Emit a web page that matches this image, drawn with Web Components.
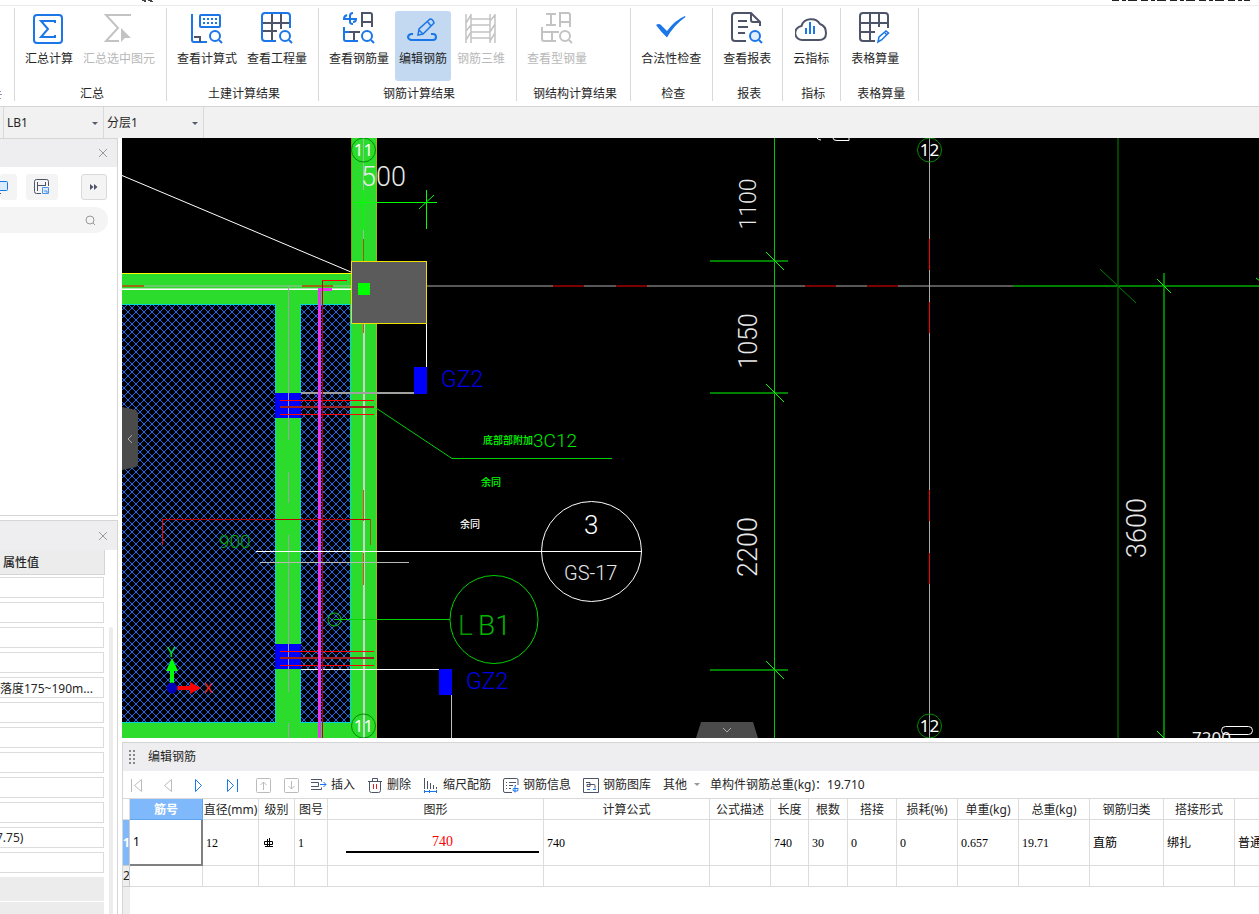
<!DOCTYPE html>
<html lang="zh-CN">
<head>
<meta charset="utf-8">
<title>编辑钢筋</title>
<style>
html,body{margin:0;height:100%}
body{font:12px/18px "Noto Sans","Noto Sans CJK SC",sans-serif;color:#262626;background:#fff;overflow:hidden}
</style>
</head>
<body>
<rebar-app></rebar-app>
<script>
const BLUE = '#1b76e8', DARK = '#4d5468', GREY = '#c3c3c3';
const LENS = (c, x = 24, y = 24) => `<g stroke="${c}" stroke-width="2"><circle cx="${x}" cy="${y}" r="5"/><path d="M${x + 4} ${y + 4}l3 3"/></g>`;
const ICONS = {
  sum: `<g stroke="${BLUE}" stroke-width="2"><rect x="1" y="3" width="28" height="28" rx="3"/><path d="M22 11V9H8l7 8-7 8h14v-2"/></g>`,
  sumsel: `<path stroke="${GREY}" stroke-width="2" d="M28 3H3l12 13L3 29h13"/><path fill="${GREY}" d="M18 16l10 10h-6l-4 4z"/>`,
  formula: `<path stroke="${BLUE}" stroke-width="2" d="M1 2v26q0 2 2 2h13"/><path stroke="${DARK}" stroke-width="2" d="M3 25h6v5"/><rect x="9" y="3" width="20" height="12" rx="1" stroke="${BLUE}" stroke-width="2"/><path stroke="${BLUE}" stroke-width="2" stroke-dasharray="2 2" d="M12 7h14M12 11h14"/>${LENS(BLUE)}`,
  quantity: `<path stroke="${DARK}" stroke-width="2" d="M11 2v27M20 2v15M2 11h27M2 19h14"/><path stroke="${BLUE}" stroke-width="2" d="M29 16V4q0-3-3-3H4Q1 1 1 4v22q0 3 3 3h11"/>${LENS(BLUE)}`,
  rebar: `<g stroke-width="2"><g stroke="${BLUE}"><path d="M10 1Q7 1 7 4v6q0 2 3 2M4 3Q1 4 1 7h12q0 3-3 3M1 15v12q0 2 2 2h12M1 20h5"/></g><g stroke="${DARK}"><path d="M19 15V1h8q2 0 2 2v12M19 10h10M6 20h11M11 20v8"/></g></g>${LENS(BLUE)}`,
  edit: `<g stroke="${BLUE}" stroke-width="2"><path d="M6 22H4q-3 1-3 3t3 3h22q3 0 3-3t-3-3h-2"/><path stroke-width="1.500" d="M11 23l1-6L23 7q3 0 4 4L16 22zM20 9l4 5M12 18l4 4"/></g>`,
  view3d: `<g stroke="${GREY}" stroke-width="1.500"><path d="M1 2v29M6 2v29M25 2v29M30 2v29M6 7h19M6 13h19M6 20h19M6 26h19M1 11l5-8M1 28l5-8M25 9l5-6M25 29l5-8M1 19l5-6M25 20l5-8"/></g>`,
  steel: `<g stroke="${GREY}" stroke-width="2"><path d="M5 2h10M10 2v11M5 13h10M19 15V1h8q2 0 2 2v12M19 10h10M1 15v12q0 2 2 2h12M1 20h17M11 20v9"/></g>${LENS(GREY)}`,
  check: `<path fill="${BLUE}" d="M1 13q3-2 5 0l6 6Q20 8 30 4l.5 1Q19 13 12 25.500 6 20 1 13z"/>`,
  report: `<path stroke="${DARK}" stroke-width="2" d="M15 29H4q-3 0-3-3V4q0-3 3-3h16l9 9v4M20 1v7q0 2 2 2h7M7 9h9M7 15h10M7 21h7"/><circle cx="24" cy="24" r="5" fill="#e3eefc"/>${LENS(BLUE)}`,
  cloud: `<path stroke="${DARK}" stroke-width="2" d="M8 28a7 7 0 0 1-1.500-14A10 9 0 0 1 25 12q6 2 6 9t-7 7z"/><path stroke="${BLUE}" stroke-width="2" d="M11 16v6M15 10v12M19 14v8"/>`,
  table: `<path stroke="${DARK}" stroke-width="2" d="M16 29H4q-3 0-3-3V4q0-3 3-3h22q3 0 3 3v12M11 1v28M20 1v14M1 11h28M1 20h15"/><path stroke="${BLUE}" stroke-width="1.500" d="M19 30l1-5 7-6 2.500 2-7 7zM26 21l2 2"/>`,
  first: `<path stroke="#bbb" d="M3.500 2v13M13.500 2.500v12l-7-6z"/>`,
  prev: `<path stroke="#bbb" d="M11.500 2.500v12l-7-6z"/>`,
  next: `<path stroke="${BLUE}" d="M3.500 2.500v12l6-6z"/>`,
  last: `<path stroke="${BLUE}" d="M3.500 2.500v12l6-6zM13.500 2v13"/>`,
  up: `<rect x=".5" y="1.500" width="14" height="14" rx="1" stroke="#bbb"/><path stroke="#bbb" d="M7.500 13V5M4.500 8l3-3 3 3"/>`,
  down: `<rect x=".5" y="1.500" width="14" height="14" rx="1" stroke="#bbb"/><path stroke="#bbb" d="M7.500 4v8M4.500 9l3 3 3-3"/>`,
  insert: `<path stroke="${DARK}" d="M0 2.500h10.500v2M0 12.500h10.500v-2M0 5.500h7.500v4H0"/><path stroke="${BLUE}" d="M9 7.500h6M12.500 5l2.500 2.500-2.500 2.500"/>`,
  trash: `<path stroke="${DARK}" d="M1 4.500h14M2.500 4.500v9q0 2 2 2h7q2 0 2-2v-9M5.500 4V1.500h5V4"/><path stroke="#e02020" d="M6.500 7v5M9.500 7v5"/>`,
  scale: `<path stroke="${DARK}" d="M1.500 1v11M4.500 4v8M7.500 6v6M10.500 8v4M13.500 10v2"/><path stroke="${BLUE}" d="M1 14.500h13M1.500 13v3M6.500 13v3M13.500 13v3"/>`,
  info: `<path stroke="${DARK}" d="M9 15.500H2q-1.500 0-1.500-1.500V3q0-1.500 1.500-1.500h11.500q1.500 0 1.500 1.500v5M3 5.500h1M6 5.500h7M3 8.500h1M6 8.500h4M3 11.500h1M6 11.500h2"/><path stroke="${BLUE}" d="M13 8.500h-1v7M15.500 11.500h-5q-1 1 0 2.500h4q1-1 0-2.500"/>`,
  library: `<path stroke="${DARK}" d="M.5 1.500h15v14H.5zM3 5.500h4v4H4v-2h7q1 0 1 1v3"/><path stroke="${BLUE}" d="M4 12.500h3M10 12.500h3"/>`,
};
const svg = (name, size) => `<svg width="${size}" height="${size}" viewBox="0 0 ${size} ${size}" fill="none" aria-hidden="true">${ICONS[name]}</svg>`;
const BUTTON_RESET = `button{all:unset;box-sizing:border-box;cursor:default}svg{display:block}`;

function define(tag, render) {
  customElements.define(tag, class extends HTMLElement {
    connectedCallback() {
      if (this.shadowRoot) return;
      this.attachShadow({ mode: 'open' }).innerHTML = render(this);
    }
  });
}

define('ribbon-button', el => `<style>${BUTTON_RESET}
:host{display:block}
button{display:flex;flex-direction:column;align-items:center;gap:6px;height:70px;padding:1px 4px 0;border-radius:3px;white-space:nowrap}
button[aria-pressed=true]{background:#c2d9f1}
button:disabled{color:#b8b8b8}
</style><button type="button" ${el.hasAttribute('active') ? 'aria-pressed="true"' : ''} ${el.hasAttribute('disabled') ? 'disabled' : ''}>${svg(el.getAttribute('icon'), 32)}<span><slot></slot></span></button>`);

define('ribbon-group', el => `<style>
:host{display:flex;flex-direction:column;gap:3px;flex:none;border-right:1px solid #d9d9d9}
.row{display:flex;gap:2px;padding:3px 7px 0 6px}
.label{padding:0 13px 0 16px;text-align:center;white-space:nowrap;line-height:20px}
</style><div class="row"><slot></slot></div><div class="label">${el.getAttribute('label') || ''}</div>`);

define('ribbon-bar', () => `<style>
:host{display:flex;flex-direction:column;flex:none;border-bottom:1px solid #d5d5d5}
.edge{height:5px;border-bottom:1px solid #ececec;display:flex;justify-content:space-between;align-items:flex-start;padding:0 9px 0 142px}
.edge svg{display:block}
nav{display:flex;padding:2px 0 5px;height:93px}
.cut{width:14px;flex:none;border-right:1px solid #d9d9d9}
.cut svg{display:block;margin-top:81px}
</style>
<div class="edge"><svg width="12" height="2"><path stroke="#444" d="M0 .5h4M6 .5h4M2 1.500h2M8 1.500h3"/></svg><svg width="138" height="2"><path stroke="#222" stroke-dasharray="7 3 4 2 9 4" d="M0 .5h138"/></svg></div>
<nav aria-label="工程量">
<div class="cut"><svg width="2" height="12"><path stroke="#8899bb" d="M0 2.500h1M0 5.500h2M0 9.500h1"/></svg></div>
<ribbon-group label="汇总"><ribbon-button icon="sum">汇总计算</ribbon-button><ribbon-button icon="sumsel" disabled>汇总选中图元</ribbon-button></ribbon-group>
<ribbon-group label="土建计算结果"><ribbon-button icon="formula">查看计算式</ribbon-button><ribbon-button icon="quantity">查看工程量</ribbon-button></ribbon-group>
<ribbon-group label="钢筋计算结果"><ribbon-button icon="rebar">查看钢筋量</ribbon-button><ribbon-button icon="edit" active>编辑钢筋</ribbon-button><ribbon-button icon="view3d" disabled>钢筋三维</ribbon-button></ribbon-group>
<ribbon-group label="钢结构计算结果"><ribbon-button icon="steel" disabled>查看型钢量</ribbon-button></ribbon-group>
<ribbon-group label="检查"><ribbon-button icon="check">合法性检查</ribbon-button></ribbon-group>
<ribbon-group label="报表"><ribbon-button icon="report">查看报表</ribbon-button></ribbon-group>
<ribbon-group label="指标"><ribbon-button icon="cloud">云指标</ribbon-button></ribbon-group>
<ribbon-group label="表格算量"><ribbon-button icon="table">表格算量</ribbon-button></ribbon-group>
</nav>`);

define('combo-bar', () => `<style>
:host{display:flex;flex:none;height:31px;background:#f1f1f1;padding-left:3px}
label{position:relative;display:block;width:100px;box-sizing:border-box;border-left:1px solid #d9d9d9}
label:last-child{width:101px;border-right:1px solid #d9d9d9}
label::after{content:"";position:absolute;right:5px;top:15px;border:3px solid transparent;border-top-color:#555c6e;border-bottom:0}
select{appearance:none;width:100%;height:31px;border:0;background:none;font:inherit;color:inherit;padding:0 3px;outline:0}
</style><label><select aria-label="构件"><option>LB1</option></select></label><label><select aria-label="分层"><option>分层1</option></select></label>`);

define('panel-head', () => `<style>${BUTTON_RESET}
:host{display:flex;justify-content:flex-end;align-items:center;flex:none;background:#eeeef0;padding-right:9px}
</style><button type="button" aria-label="关闭"><svg width="10" height="10" stroke="#999" fill="none"><path d="M1 1l8 8M9 1l-8 8"/></svg></button>`);

define('component-panel', () => `<style>${BUTTON_RESET}
:host{display:flex;flex-direction:column;border:1px solid #d5d5d5;border-left:0;box-sizing:border-box}
panel-head{height:28px}
.tools{display:flex;padding:7px 10px 7px 0}
.tools button{height:26px;border-radius:3px;background:#f4f4f4;display:flex;align-items:center;justify-content:center}
.a{width:17px}.b{width:32px;margin-left:9px}
.tools .c{width:26px;margin-left:auto;border:1px solid #dadada}
.search{display:flex;align-items:center;height:26px;margin-right:9px;padding-right:12px;border-radius:0 13px 13px 0;background:#f4f4f4}
input{flex:1;min-width:0;border:0;background:none;font:inherit;outline:0}
</style><panel-head></panel-head>
<div class="tools">
<button class="a" type="button" aria-label="显示"><svg width="17" height="16" fill="none"><path d="M0 2.500h6.500q1 0 1 1v7q0 1-1 1H0" fill="#dcebfc" stroke="${BLUE}"/><path d="M0 14.500h1" stroke="${DARK}"/></svg></button>
<button class="b" type="button" aria-label="保存构件"><svg width="16" height="16" fill="none"><path d="M7 14.500H2.500q-2 0-2-2v-10q0-2 2-2h10q2 0 2 2V7M3.500 3v9M3.500 6.500h8M11.500 3v4" stroke="${DARK}"/><path d="M8.500 8.500h6v6h-6zM10 12h3v2" fill="#dcebfc" stroke="#4d94ec"/></svg></button>
<button class="c" type="button" aria-label="更多"><svg width="8" height="6" fill="${DARK}"><path d="M0 0l3.500 3L0 6zM4 0l3.500 3L4 6z"/></svg></button>
</div>
<div class="search"><input type="search" aria-label="搜索构件"><svg width="11" height="11" fill="none" stroke="#999"><circle cx="5" cy="5" r="4"/><path d="M8 8l2 2"/></svg></div>`);

const PROPS = ['', '', '', '', '落度175~190m...', '', '', '', '', '', '7.75)', ''];
define('property-panel', () => `<style>
:host{display:flex;flex-direction:column;border:1px solid #d5d5d5;border-left:0;border-bottom:0;box-sizing:border-box;overflow:hidden}
panel-head{height:29px}
.body{display:flex;flex:1;min-height:0;gap:4px}
.grid{width:105px;flex:none}
.head{box-sizing:border-box;height:25px;margin-bottom:2px;padding:1px 3px;line-height:24px;font-weight:500;background:#ececec;border:solid #d5d5d5;border-width:0 1px 1px 0}
input{display:block;box-sizing:border-box;width:104px;height:21px;margin-bottom:4px;padding:0;border:1px solid #dcdcdc;border-left:0;font:inherit;color:inherit;background:#fff;outline:0}
.clip{text-indent:-4px}
.group{width:104px;height:24px;background:#ececec;margin-bottom:1px}
.bar{width:4px;margin-top:77px;border-radius:2px 2px 0 0;background:#ececec}
</style><panel-head></panel-head><div class="body"><div class="grid"><div class="head">属性值</div>
${PROPS.map((v, i) => `<input readonly aria-label="属性值 ${i + 1}" value="${v}"${i === 10 ? ' class="clip"' : ''}>`).join('')}
<div class="group"></div><div class="group"></div></div><div class="bar"></div></div>`);

const hl = (x1, x2, y, c, w = 1) => `<rect x="${x1}" y="${y}" width="${x2 - x1}" height="${w}" fill="${c}"/>`;
const vl = (x, y1, y2, c, w = 1) => `<rect x="${x}" y="${y1}" width="${w}" height="${y2 - y1}" fill="${c}"/>`;
const ln = (x1, y1, x2, y2, c) => `<path d="M${x1} ${y1}L${x2} ${y2}" stroke="${c}"/>`;
const box = (x, y, w, h, c) => `<rect x="${x}" y="${y}" width="${w}" height="${h}" fill="${c}"/>`;
const cad = (x, y, s, size, c) => `<text class="cad" x="${x}" y="${y}" font-size="${size}" fill="${c}">${s}</text>`;
const up = (x, y, s, size, c) => `<text class="cad" transform="translate(${x} ${y}) rotate(-90)" text-anchor="middle" font-size="${size}" fill="${c}">${s}</text>`;
const axis = (x, y, s) => `<circle cx="${x}" cy="${y}" r="12" fill="none" stroke="#008c00"/><text x="${x}" y="${y + 6}" text-anchor="middle" font-size="17" fill="#fff">${s}</text>`;
const bars = y => box(275, y, 26, 25, '#00f') + vl(288, y, y + 25, '#99f') + hl(280, 374, y + 7, '#f00') + hl(280, 374, y + 13, '#a02020', 2) + hl(280, 374, y + 21, '#f00');
const dim = y => hl(710, 788, y, '#008000', 2) + ln(766, y - 8, 784, y + 10, '#0f0');

define('cad-canvas', () => `<style>${BUTTON_RESET}
:host{display:block;position:relative;overflow:hidden;background:#000;flex:1;min-height:0}
.draw{position:absolute;inset:0;width:100%;height:100%}
text{font-family:"Noto Sans","Noto Sans CJK SC",sans-serif}
.cad{font-family:"Roboto","Noto Sans CJK SC",sans-serif;font-weight:300}
.note{font-family:"Noto Sans CJK SC",sans-serif;font-weight:500}
button{position:absolute;display:flex;align-items:center;justify-content:center;background:#4b4b4b}
.left{left:0;top:269px;width:16px;height:63px;clip-path:polygon(0 0,14px 3px,16px 6px,16px 57px,14px 60px,0 63px)}
.bottom{left:574px;bottom:0;width:62px;height:16px;clip-path:polygon(5px 0,57px 0,62px 16px,0 16px)}
</style>
<svg class="draw" role="img" aria-label="平面图"><defs><pattern id="hatch" width="8" height="8" patternUnits="userSpaceOnUse"><path d="M0 0l8 8M8 0L0 8" stroke="#1c6cf0" fill="none" shape-rendering="crispEdges"/></pattern></defs>
<g transform="translate(-122 -138)">
${ln(122, 175.5, 351, 272, '#fff')}
${box(122, 273, 229, 465, '#2cdc2c')}${box(351, 138, 26, 600, '#2cdc2c')}
${hl(122, 351, 273, '#ff0')}${vl(351, 138, 261, '#8c9a00')}${vl(376, 138, 738, '#b4b400')}
<g stroke="#00d8d8"><rect x="120.500" y="304.500" width="155" height="418" fill="#000"/><rect x="300.500" y="304.500" width="50" height="418" fill="#000"/></g>
<rect x="122" y="305" width="153" height="417" fill="url(#hatch)"/><rect x="301" y="305" width="49" height="417" fill="url(#hatch)"/>
${hl(122, 351, 285, '#6cc86c', 2)}${hl(122, 144, 285, '#9c6a14', 2)}${hl(302, 333, 285, '#9c6a14', 2)}${hl(122, 351, 289, '#fff', 1)}${hl(122, 351, 288, '#a0eca0')}
${vl(288, 287, 440, '#a0a0a0')}${vl(288, 472, 503, '#a0a0a0')}${vl(288, 535, 692, '#a0a0a0')}${vl(288, 723, 738, '#a0a0a0')}
${vl(363, 138, 239, '#8cc88c')}${vl(363, 190, 230, '#0f0')}${vl(363, 239, 261, '#a05a10')}${vl(363, 324, 738, '#d0d0d0', 2)}${vl(363, 324, 333, '#f04030')}${vl(363, 490, 521, '#f04030')}${vl(363, 553, 585, '#f04030')}
${bars(393)}${bars(644)}
${hl(301, 414, 392, '#a0a0a0', 2)}${hl(301, 439, 669, '#fff')}
${vl(318, 288, 738, '#f030f0', 3)}${hl(318, 332, 288, '#f030f0', 3)}${vl(322, 280, 738, '#b00808')}${hl(322, 347, 280, '#f00')}
${hl(162, 370, 519, '#c00000')}${vl(162, 519, 545, '#f00')}${vl(370, 519, 545, '#a05a10')}
${hl(427, 1013, 285, '#585858', 2)}${hl(1013, 2400, 285, '#008000', 2)}
${[553, 616, 805, 867].map(x => hl(x, x + 31, 285, '#780000', 2)).join('')}
<rect x="351.500" y="261.500" width="75" height="62" fill="#5b5b5b" stroke="#f0e000"/>${box(358, 283, 12, 12, '#0f0')}
${axis(363.5, 150, '11')}${axis(363.5, 726, '11')}
${cad(361, 186, '500', 27, '#e8e8e8')}
${hl(353, 437, 202, '#0f0')}${vl(426, 190, 229, '#0f0')}${ln(419, 209, 434, 195, '#0f0')}${ln(356, 209, 371, 195, '#0f0')}
${vl(426, 324, 368, '#fff')}${box(414, 367, 13, 27, '#00f')}${cad(441, 387, 'GZ2', 23, '#0000e8')}
${ln(376, 408, 452, 458.5, '#00d000')}${hl(452, 612, 458, '#00d000')}
<g class="note"><text x="483" y="444" font-size="10" fill="#0f0">底部部附加</text><text x="481" y="486" font-size="10" fill="#0f0">余同</text><text x="460" y="528" font-size="10" fill="#fff">余同</text></g>
${cad(533, 447, '3C12', 19, '#00e800')}
<circle cx="591.500" cy="551.500" r="50" fill="none" stroke="#fff"/>${hl(256, 642, 551, '#fff')}${hl(260, 409, 562, '#b8b8b8')}
${cad(584, 534, '3', 26, '#fff')}${cad(564, 580, 'GS-17', 20, '#e8e8e8')}
${cad(219, 548, '900', 19, '#00a800')}
<circle cx="494" cy="619.500" r="44" fill="none" stroke="#00d000"/><circle cx="334.500" cy="619.500" r="6.500" fill="none" stroke="#00c800"/>${hl(334, 450, 619, '#00d000')}
${cad(458, 635, 'L', 28, '#009800')}${cad(478, 635, 'B1', 28, '#00b800')}
${box(439, 669, 13, 26, '#00f')}${vl(451, 695, 738, '#c0c0c0')}${cad(466, 689, 'GZ2', 23, '#0000e8')}
${vl(774, 138, 738, '#00c800')}${dim(260)}${dim(392)}${dim(669)}
${up(756, 204, '1100', 23, '#e8e8e8')}${up(757, 341, '1050', 25, '#e8e8e8')}${up(757, 547, '2200', 27, '#e8e8e8')}
${vl(929, 138, 738, '#aaa')}${vl(929, 239, 270, '#f00')}${vl(929, 302, 333, '#f00')}${vl(929, 490, 521, '#f00')}${vl(929, 553, 584, '#f00')}
${axis(929.5, 150, '12')}${axis(929.5, 726, '12')}
<path d="M817 138q1 2 4 2M833 138q0 2.500 4 2.500h12v-3" fill="none" stroke="#fff"/>
${vl(1117, 138, 738, '#004400', 2)}${vl(1163, 273, 738, '#008000', 2)}
${ln(1100, 269, 1136, 303, '#008000')}${ln(1157, 279, 1171, 293, '#0f0')}${ln(1256, 278, 1260, 281, '#0f0')}${ln(1157, 731, 1164, 738, '#0f0')}
${up(1146, 528, '3600', 27, '#e8e8e8')}
<text x="1192" y="744" font-size="17" fill="#eee">7200</text><rect x="1221.500" y="726.500" width="31" height="8" rx="4" fill="none" stroke="#fff"/>
<path d="M170 683v-12h-4l6-13 6 13h-4v12z" fill="#0f0"/><path d="M177 686h13v-4l11 6-11 6v-4h-13z" fill="#f00"/><circle cx="172" cy="688" r="5.500" fill="#0000b8"/>
<text x="167" y="657" font-size="15" fill="#00e030">Y</text><text x="204" y="693" font-size="15" fill="#ff2020">X</text>
</g></svg>
<button class="left" type="button" aria-label="收起左侧面板"><svg width="6" height="10" fill="none" stroke="#aaa"><path d="M5 1L1 5l4 4"/></svg></button>
<button class="bottom" type="button" aria-label="收起底部面板"><svg width="10" height="6" fill="none" stroke="#aaa"><path d="M1 1l4 4 4-4"/></svg></button>`);

define('tool-button', el => `<style>${BUTTON_RESET}
:host{display:block;flex:none}
button{display:flex;align-items:center;gap:4px;white-space:nowrap}
.caret{border:3px solid transparent;border-top-color:#999;border-bottom:0;margin-left:3px}
</style><button type="button" ${el.title ? `aria-label="${el.title}"` : ''}>${el.hasAttribute('icon') ? svg(el.getAttribute('icon'), 16) : ''}<slot></slot>${el.hasAttribute('menu') ? '<i class="caret"></i>' : ''}</button>`);

const COLS = [['筋号', 73, '1'], ['直径(mm)', 56, '12'], ['级别', 36, 'mark'], ['图号', 33, '1'], ['图形', 216, 'shape'], ['计算公式', 166, '740'], ['公式描述', 61, ''], ['长度', 38, '740'], ['根数', 39, '30'], ['搭接', 49, '0'], ['损耗(%)', 61, '0'], ['单重(kg)', 61, '0.657'], ['总重(kg)', 71, '19.71'], ['钢筋归类', 74, '直筋'], ['搭接形式', 71, '绑扎'], ['', 100, '普通']];
const cell = v => v === 'mark' ? '<svg width="10" height="10" fill="none" stroke="#000" aria-label="级别"><path d="M.5 3.500h8v3h-8zM3.500 1v7M5.500 0v9M1 8.500h8"/></svg>' : v === 'shape' ? '<div class="shape">740</div>' : v;
define('rebar-table', () => `<style>
:host{display:block;flex:1;overflow:hidden;background:linear-gradient(90deg,#eee 7px,#fff 7px)}
table{table-layout:fixed;width:1212px;border-spacing:0;background:#fff}
th,td{box-sizing:border-box;padding:0;border:solid #dcdcdc;border-width:0 1px 1px 0;white-space:nowrap;overflow:hidden;font-weight:400}
thead th{height:21px;line-height:18px;padding-top:2px;text-align:center}
thead th:nth-child(2){background:#7fb8fb;color:#fff;font-weight:700;border-color:#5fa4f0}
tbody th{background:#eee;text-align:center;border-color:#ccc}
tbody tr:first-child>*{height:46px}tbody tr:last-child>*{height:21px}
tbody tr:first-child th{background:#7fb8fb;color:#fff;font-weight:700}
td{padding-left:3px;font-family:"Liberation Serif","Noto Sans CJK SC",serif;color:#000}
tbody tr:first-child td:nth-child(2){font:inherit;border-right:2px solid #808080;border-bottom:2px solid #808080}
td svg{display:block;margin-left:2px}
.shape{margin:0 4px 0 15px;height:20px;line-height:18px;font-size:14px;text-align:center;color:#f00;border-bottom:2px solid #000;box-sizing:border-box}
</style><table><colgroup><col style="width:7px">${COLS.map(c => `<col style="width:${c[1]}px">`).join('')}</colgroup>
<thead><tr><th></th>${COLS.map(c => `<th scope="col">${c[0]}</th>`).join('')}</tr></thead>
<tbody><tr><th scope="row">1</th>${COLS.map(c => `<td>${cell(c[2])}</td>`).join('')}</tr><tr><th scope="row">2</th>${COLS.map(() => '<td></td>').join('')}</tr></tbody></table>`);

define('rebar-editor', () => `<style>
:host{display:flex;flex-direction:column;flex:none;height:172px;box-sizing:border-box;border:solid #d5d5d5;border-width:1px 0 0 1px}
header{display:flex;align-items:center;gap:12px;height:28px;padding-left:6px;background:#eeeef0;line-height:20px}
.bar{display:flex;align-items:center;gap:12px;height:28px;box-sizing:border-box;padding-left:5px;border-bottom:1px solid #d9d9d9;white-space:nowrap;line-height:20px}
.nav{display:flex;gap:16px}.move{display:flex;gap:12px;margin:0 -1px 0 4px}
.total{margin-left:-2px}
</style><header><svg width="7" height="14" fill="#888"><path d="M0 0h2v2H0zM0 4h2v2H0zM0 8h2v2H0zM0 12h2v2H0zM4 0h2v2H4zM4 4h2v2H4zM4 8h2v2H4zM4 12h2v2H4z"/></svg><span>编辑钢筋</span></header>
<div class="bar"><div class="nav"><tool-button icon="first" title="首条"></tool-button><tool-button icon="prev" title="上一条"></tool-button><tool-button icon="next" title="下一条"></tool-button><tool-button icon="last" title="末条"></tool-button></div>
<div class="move"><tool-button icon="up" title="上移"></tool-button><tool-button icon="down" title="下移"></tool-button></div>
<tool-button icon="insert">插入</tool-button><tool-button icon="trash">删除</tool-button><tool-button icon="scale">缩尺配筋</tool-button><tool-button icon="info">钢筋信息</tool-button><tool-button icon="library">钢筋图库</tool-button><tool-button menu>其他</tool-button><span class="total">单构件钢筋总重(kg)：19.710</span></div>
<rebar-table></rebar-table>`);

define('rebar-app', () => `<style>
:host{display:flex;flex-direction:column;height:100vh;overflow:hidden}
main{display:flex;flex:1;min-height:0;gap:4px}
aside{display:flex;flex-direction:column;gap:4px;width:118px;flex:none}
component-panel{flex:1 1 0}property-panel{flex:0 0 394px}
.work{display:flex;flex-direction:column;gap:4px;flex:1;min-width:0}
</style><ribbon-bar></ribbon-bar><combo-bar></combo-bar>
<main><aside><component-panel></component-panel><property-panel></property-panel></aside><section class="work"><cad-canvas></cad-canvas><rebar-editor></rebar-editor></section></main>`);
</script>
</body>
</html>
